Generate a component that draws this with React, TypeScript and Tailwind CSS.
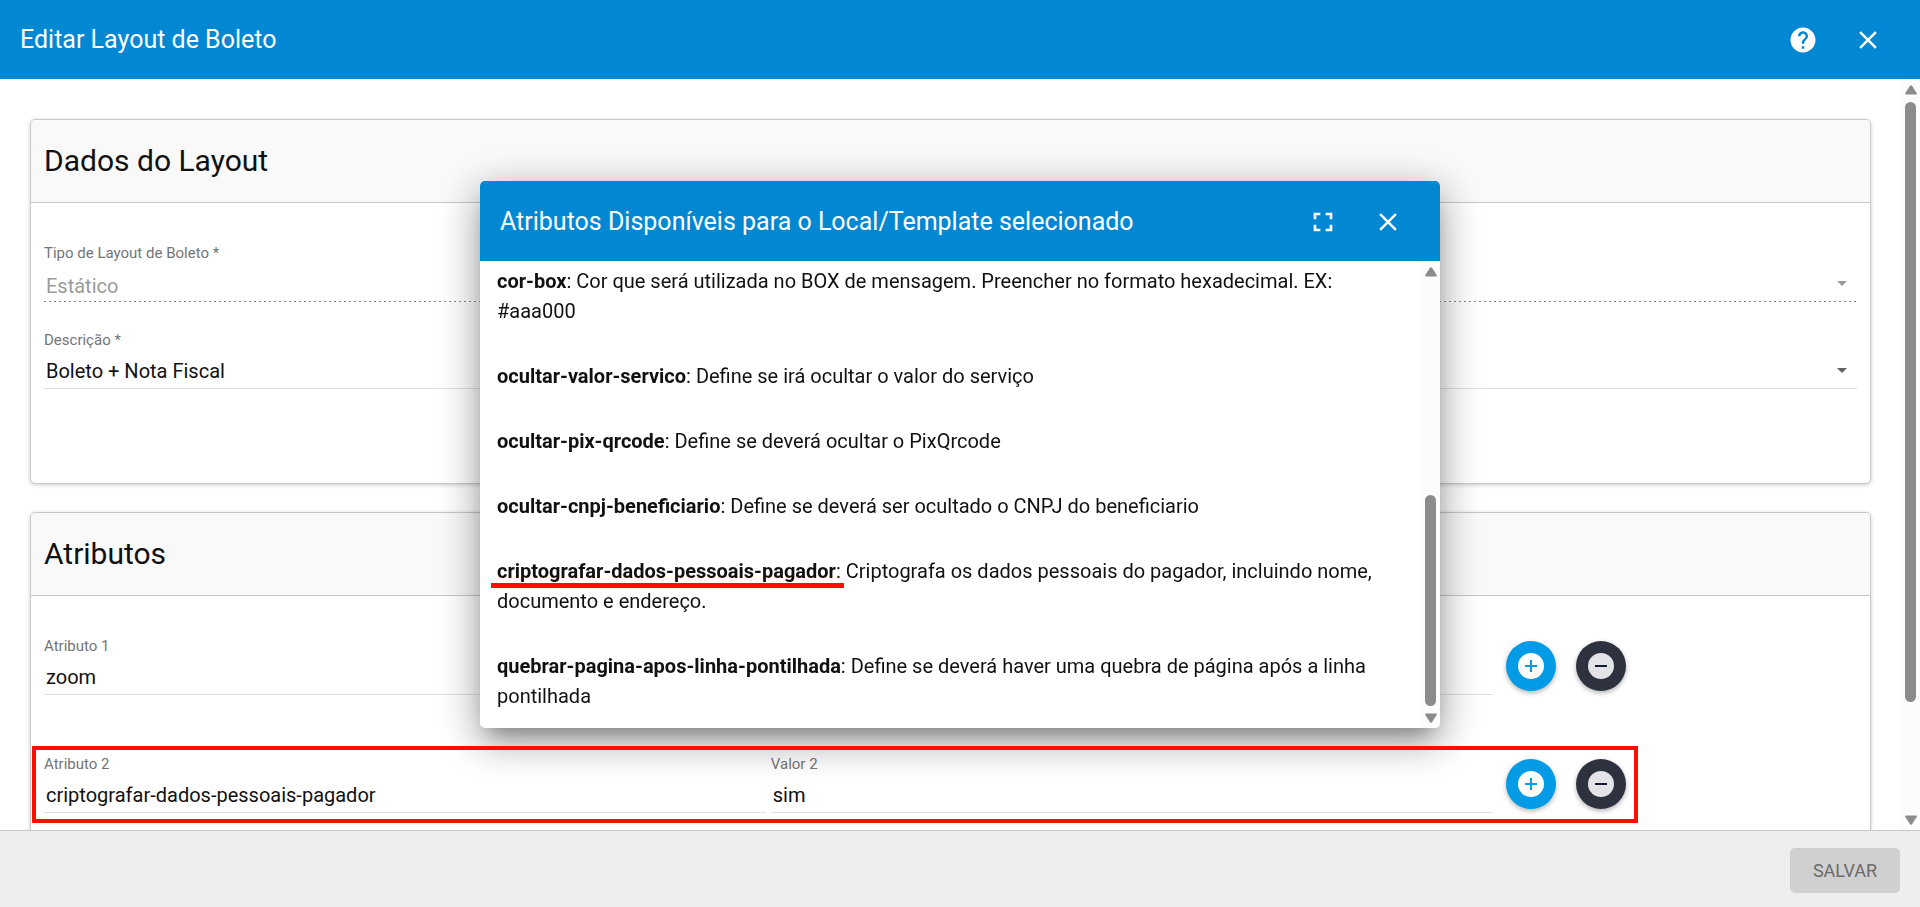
import { useId } from "react";
import type { ReactNode } from "react";
import clsx from "clsx";
import { MdClose, MdFullscreen, MdHelp } from "react-icons/md";

const availableAttributes = [
  {
    name: "cor-box",
    text: "Cor que será utilizada no BOX de mensagem. Preencher no formato hexadecimal. EX: #aaa000",
  },
  {
    name: "ocultar-valor-servico",
    text: "Define se irá ocultar o valor do serviço",
  },
  {
    name: "ocultar-pix-qrcode",
    text: "Define se deverá ocultar o PixQrcode",
  },
  {
    name: "ocultar-cnpj-beneficiario",
    text: "Define se deverá ser ocultado o CNPJ do beneficiario",
  },
  {
    name: "criptografar-dados-pessoais-pagador",
    text: "Criptografa os dados pessoais do pagador, incluindo nome, documento e endereço.",
    marked: true,
  },
  {
    name: "quebrar-pagina-apos-linha-pontilhada",
    text: "Define se deverá haver uma quebra de página após a linha pontilhada",
  },
];

const attributeRows = [
  { attribute: "zoom", value: "" },
  {
    attribute: "criptografar-dados-pessoais-pagador",
    value: "sim",
    marked: true,
  },
];

function IconButton({ label, children }: { label: string; children: ReactNode }) {
  return (
    <button
      type="button"
      aria-label={label}
      className="flex w-[60px] h-[60px] items-center justify-center"
    >
      {children}
    </button>
  );
}

function ScrollRail({ before, thumb, after }: { before: number; thumb: number; after: number }) {
  return (
    <div
      aria-hidden="true"
      className="flex w-[19px] shrink-0 flex-col items-center gap-[7px] bg-[#fcfcfc] pb-[5px] pt-[6px]"
    >
      <svg width="12" height="10" viewBox="0 0 12 10" fill="#8b8b8b">
        <path d="M5 .8Q6-.4 7 .8L11.7 8Q12.3 9.6 11 9.6H1Q-.3 9.6.3 8Z" />
      </svg>
      <div className="flex w-[11px] flex-1 flex-col">
        <div style={{ flexGrow: before }} />
        <div className="rounded-full bg-[#8b8b8b]" style={{ flexGrow: thumb }} />
        <div style={{ flexGrow: after }} />
      </div>
      <svg width="12" height="10" viewBox="0 0 12 10" fill="#8b8b8b">
        <path d="M5 9.2Q6 10.4 7 9.2L11.7 2Q12.3.4 11 .4H1Q-.3.4.3 2Z" />
      </svg>
    </div>
  );
}

function Card({ title, children }: { title: string; children: ReactNode }) {
  return (
    <section className="rounded-[5px] border border-[#c8c8c8] bg-white shadow-[0_1px_4px_rgba(0,0,0,0.2)]">
      <h2 className="flex h-[83px] items-center rounded-t-[4px] border-b border-[#c8c8c8] bg-[#f9f9f9] px-[13px] pb-[2px] text-[30px]">
        {title}
      </h2>
      <div className="px-[13px] pt-10">{children}</div>
    </section>
  );
}

function TextField({ label, value }: { label: string; value: string }) {
  const id = useId();
  return (
    <div className="flex flex-col">
      <label htmlFor={id} className="h-5 text-[15px] leading-5 text-[#757575]">
        {label}
      </label>
      <input
        id={id}
        defaultValue={value}
        className="h-[39px] w-full border-b border-[#e0e0e0] px-[2px] pt-1 text-[20px] outline-none"
      />
    </div>
  );
}

function SelectField({
  label,
  value,
  hideLabel,
  disabled,
}: {
  label: string;
  value: string;
  hideLabel?: boolean;
  disabled?: boolean;
}) {
  const id = useId();
  return (
    <div className="flex flex-col justify-end">
      {!hideLabel && (
        <label htmlFor={id} className="h-5 text-[15px] leading-5 text-[#757575]">
          {label}
        </label>
      )}
      <div
        className={clsx(
          "flex h-[39px] items-center",
          disabled
            ? "bg-[linear-gradient(to_right,#8a8a8a_40%,transparent_40%)] bg-[length:5px_1px] bg-bottom-left bg-repeat-x text-[#9b9b9b]"
            : "border-b border-[#e0e0e0] text-[#616161]",
        )}
      >
        <select
          id={id}
          aria-label={hideLabel ? label : undefined}
          disabled={disabled}
          defaultValue={value}
          className="h-full flex-1 appearance-none px-[2px] pt-1.5 text-[20px] opacity-100 outline-none"
        >
          <option>{value}</option>
        </select>
        <svg width="10" height="7" viewBox="0 0 10 7" fill="currentColor" className="mr-[10px]">
          <path d="M0 2h10L5 7z" />
        </svg>
      </div>
    </div>
  );
}

function AttributesDialog() {
  return (
    <div className="fixed inset-0 z-10 flex items-center justify-center pt-[2px]">
      <div
        role="dialog"
        aria-labelledby="dialog-title"
        className="flex w-1/2 flex-col overflow-hidden rounded-[5px] bg-white shadow-[0_14px_19px_-9px_rgba(0,0,0,0.3),0_14px_40px_2px_rgba(0,0,0,0.24),0_8px_44px_4px_rgba(0,0,0,0.14)]"
      >
        <header className="flex h-20 items-center bg-[#0288d2] pl-5 pr-[22px] pt-[2px] text-white">
          <h2 id="dialog-title" className="flex-1 text-[25px]">
            Atributos Disponíveis para o Local/Template selecionado
          </h2>
          <div className="flex gap-[5px]">
            <IconButton label="Tela cheia">
              <MdFullscreen size={32} />
            </IconButton>
            <IconButton label="Fechar">
              <MdClose size={30} />
            </IconButton>
          </div>
        </header>
        <div className="flex">
          <div className="flex flex-1 flex-col gap-[35px] pb-[17px] pl-[17px] pr-6 pt-[5px] text-[20px] leading-[30px]">
            {availableAttributes.map((item) => (
              <p key={item.name}>
                <strong className="relative font-bold">
                  {item.name}
                  {item.marked && (
                    <span className="absolute -bottom-[5px] -left-1.5 -right-2 h-[5px] bg-[#ff0d00]" />
                  )}
                </strong>
                : {item.text}
              </p>
            ))}
          </div>
          <ScrollRail before={50} thumb={50} after={0} />
        </div>
      </div>
    </div>
  );
}

export default function App() {
  return (
    <div className="flex h-screen flex-col overflow-hidden bg-white font-[Roboto,sans-serif] text-[#111111]">
      <header className="flex h-[79px] shrink-0 items-center bg-[#0288d2] pl-5 pr-[22px] text-white">
        <h1 className="flex-1 text-[25px]">Editar Layout de Boleto</h1>
        <div className="flex gap-[5px]">
          <IconButton label="Ajuda">
            <MdHelp size={30} />
          </IconButton>
          <IconButton label="Fechar">
            <MdClose size={30} />
          </IconButton>
        </div>
      </header>

      <div className="flex min-h-0 flex-1">
        <main className="flex flex-1 flex-col gap-7 overflow-hidden px-[30px] pt-10">
          <Card title="Dados do Layout">
            <div className="flex flex-col gap-7 pb-[94px]">
              <SelectField label="Tipo de Layout de Boleto *" value="Estático" disabled />
              <div className="grid grid-cols-2 gap-[5px]">
                <TextField label="Descrição *" value="Boleto + Nota Fiscal" />
                <SelectField label="Template" value="" hideLabel />
              </div>
            </div>
          </Card>

          <Card title="Atributos">
            <div className="-mr-1 flex flex-col gap-[59px] pb-[59px]">
              {attributeRows.map((row, index) => (
                <div key={row.attribute} className="relative flex items-center">
                  <div className="w-2/5 pr-[5px]">
                    <TextField label={`Atributo ${index + 1}`} value={row.attribute} />
                  </div>
                  <div className="w-2/5 pr-[5px]">
                    <TextField label={`Valor ${index + 1}`} value={row.value} />
                  </div>
                  <div className="flex gap-5 pl-2">
                    <button
                      type="button"
                      aria-label="Adicionar atributo"
                      className="flex size-[50px] items-center justify-center rounded-full bg-[#039be5] shadow-[0_2px_5px_rgba(0,0,0,0.3)]"
                    >
                      <svg width="26" height="26" viewBox="0 0 26 26">
                        <circle cx="13" cy="13" r="13" fill="#ffffff" />
                        <path d="M13 7v12M7 13h12" stroke="#039be5" strokeWidth="2" />
                      </svg>
                    </button>
                    <button
                      type="button"
                      aria-label="Remover atributo"
                      className="flex size-[50px] items-center justify-center rounded-full bg-[#2d323e] shadow-[0_2px_5px_rgba(0,0,0,0.3)]"
                    >
                      <svg width="26" height="26" viewBox="0 0 26 26">
                        <circle cx="13" cy="13" r="13" fill="#e4e4e8" />
                        <path d="M7 13h12" stroke="#141b33" strokeWidth="2" />
                      </svg>
                    </button>
                  </div>
                  {row.marked && (
                    <div className="pointer-events-none absolute -bottom-[10px] -left-3 -top-2 right-[calc(20%-140px)] z-20 border-4 border-[#ff0d00]" />
                  )}
                </div>
              ))}
            </div>
          </Card>
        </main>
        <ScrollRail before={0} thumb={85} after={15} />
      </div>

      <footer className="flex h-[77px] shrink-0 items-center justify-end border-t border-[#c8c8c8] bg-[#eeeeee] px-5 pt-[2px]">
        <button
          type="button"
          disabled
          className="h-[45px] w-[110px] rounded-[5px] bg-[#d0d0d0] text-[18px] text-[#6b6b6b]"
        >
          SALVAR
        </button>
      </footer>

      <AttributesDialog />
    </div>
  );
}
